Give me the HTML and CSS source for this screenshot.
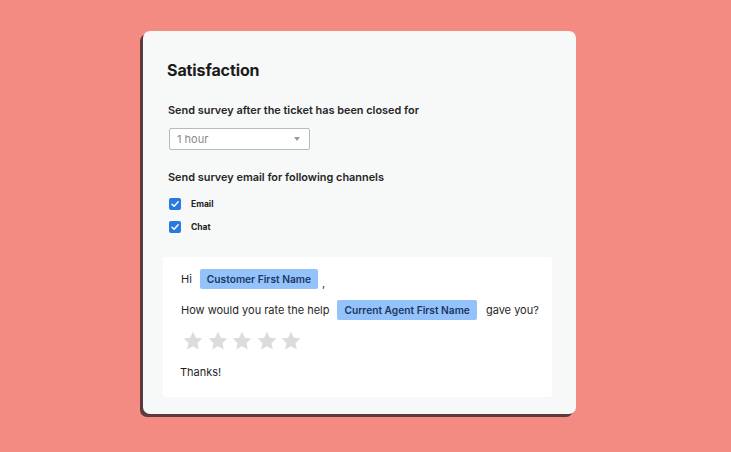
FILE: index.html
```html
<!DOCTYPE html>
<html>
<head>
<meta charset="utf-8">
<link rel="stylesheet" href="styles.css">
</head>
<body>
<div class="stage">
  <div class="card">
    <h1 class="title">Satisfaction</h1>
    <div class="label first">Send survey after the ticket has been closed for</div>
    <div class="select"><span>1 hour</span><span class="caret"></span></div>
    <div class="label second">Send survey email for following channels</div>
    <div class="checks">
      <div class="check"><span class="box"><svg viewBox="0 0 12 12" width="12" height="12"><path d="M3 6.2 L5.1 8.2 L9.2 3.8" fill="none" stroke="#fff" stroke-width="1.4" stroke-linecap="round" stroke-linejoin="round"/></svg></span><span class="ctext">Email</span></div>
      <div class="check"><span class="box"><svg viewBox="0 0 12 12" width="12" height="12"><path d="M3 6.2 L5.1 8.2 L9.2 3.8" fill="none" stroke="#fff" stroke-width="1.4" stroke-linecap="round" stroke-linejoin="round"/></svg></span><span class="ctext">Chat</span></div>
    </div>
    <div class="panel">
      <div class="line l1"><span>Hi</span><span class="chip">Customer First Name</span><span class="comma">,</span></div>
      <div class="line l2"><span>How would you rate the help</span><span class="chip">Current Agent First Name</span><span>gave you?</span></div>
      <div class="stars">
        <svg viewBox="0 0 24 24" width="22" height="22"><path d="M12 1.8l3.1 6.6 7.1.8-5.3 4.9 1.5 7.1L12 17.6l-6.4 3.6 1.5-7.1L1.8 9.2l7.1-.8z" fill="#dcdcdc"/></svg>
        <svg viewBox="0 0 24 24" width="22" height="22"><path d="M12 1.8l3.1 6.6 7.1.8-5.3 4.9 1.5 7.1L12 17.6l-6.4 3.6 1.5-7.1L1.8 9.2l7.1-.8z" fill="#dcdcdc"/></svg>
        <svg viewBox="0 0 24 24" width="22" height="22"><path d="M12 1.8l3.1 6.6 7.1.8-5.3 4.9 1.5 7.1L12 17.6l-6.4 3.6 1.5-7.1L1.8 9.2l7.1-.8z" fill="#dcdcdc"/></svg>
        <svg viewBox="0 0 24 24" width="22" height="22"><path d="M12 1.8l3.1 6.6 7.1.8-5.3 4.9 1.5 7.1L12 17.6l-6.4 3.6 1.5-7.1L1.8 9.2l7.1-.8z" fill="#dcdcdc"/></svg>
        <svg viewBox="0 0 24 24" width="22" height="22"><path d="M12 1.8l3.1 6.6 7.1.8-5.3 4.9 1.5 7.1L12 17.6l-6.4 3.6 1.5-7.1L1.8 9.2l7.1-.8z" fill="#dcdcdc"/></svg>
      </div>
      <div class="thanks">Thanks!</div>
    </div>
  </div>
</div>
</body>
</html>
```
FILE: styles.css
```css
html, body {
  margin: 0;
  padding: 0;
}
body {
  background: #f48b82;
  font-family: Inter, "Liberation Sans", sans-serif;
  color: #1f1f1f;
  width: 731px;
  height: 452px;
  overflow: hidden;
}
.stage {
  padding: 31px 0 0 143px;
}
.card {
  width: 433px;
  height: 383px;
  box-sizing: border-box;
  background: #f7f8f8;
  border-radius: 7px;
  box-shadow: -3px 3px 0 #5b3b3d;
  padding: 29px 24px 0 24px;
  display: flex;
  flex-direction: column;
}
.title {
  margin: 0;
  font-size: 16px;
  line-height: 20px;
  font-weight: 700;
  color: #1b1b1b;
  letter-spacing: -0.1px;
}
.label {
  font-size: 10.9px;
  font-weight: 600;
  line-height: 14px;
  color: #262626;
  padding-left: 1px;
}
.label.first {
  margin-top: 23px;
}
.select {
  margin-top: 11px;
  margin-left: 2px;
  width: 141px;
  height: 22px;
  box-sizing: border-box;
  border: 1px solid #b9b9b9;
  border-radius: 2px;
  background: #fff;
  display: flex;
  align-items: center;
  justify-content: space-between;
  padding: 0 9px 0 7px;
  font-size: 11px;
  color: #8a8a8a;
}
.caret {
  width: 0;
  height: 0;
  border-left: 3.5px solid transparent;
  border-right: 3.5px solid transparent;
  border-top: 4px solid #9a9a9a;
}
.label.second {
  margin-top: 20px;
}
.checks {
  margin-top: 14px;
  margin-left: 2px;
  display: flex;
  flex-direction: column;
  gap: 11px;
}
.check {
  display: flex;
  align-items: center;
  height: 12px;
}
.box {
  width: 12px;
  height: 12px;
  background: #2a79de;
  border-radius: 2px;
  display: flex;
  align-items: center;
  justify-content: center;
}
.ctext {
  margin-left: 10px;
  font-size: 8.5px;
  font-weight: 700;
  color: #222;
}
.panel {
  margin-top: 24px;
  margin-left: -4px;
  width: 389px;
  height: 140px;
  box-sizing: border-box;
  background: #ffffff;
  border-radius: 3px;
  padding: 12px 0 0 18px;
  font-size: 11px;
  color: #1f1f1f;
}
.line {
  display: flex;
  align-items: center;
  height: 20px;
}
.l1 span:first-child {
  margin-right: 8px;
}
.comma {
  margin-left: 4px;
  margin-top: 8px;
}
.l2 {
  margin-top: 11px;
}
.l2 .chip {
  margin: 0 9px 0 8px;
}
.chip {
  background: #93c3fa;
  color: #1d3763;
  font-weight: 600;
  font-size: 10.2px;
  height: 20px;
  line-height: 20px;
  padding: 0 7px;
  border-radius: 2px;
}
.stars {
  margin-top: 10px;
  margin-left: 1px;
  display: flex;
  gap: 2.5px;
}
.thanks {
  margin-top: 13px;
  margin-left: -1px;
}
```
